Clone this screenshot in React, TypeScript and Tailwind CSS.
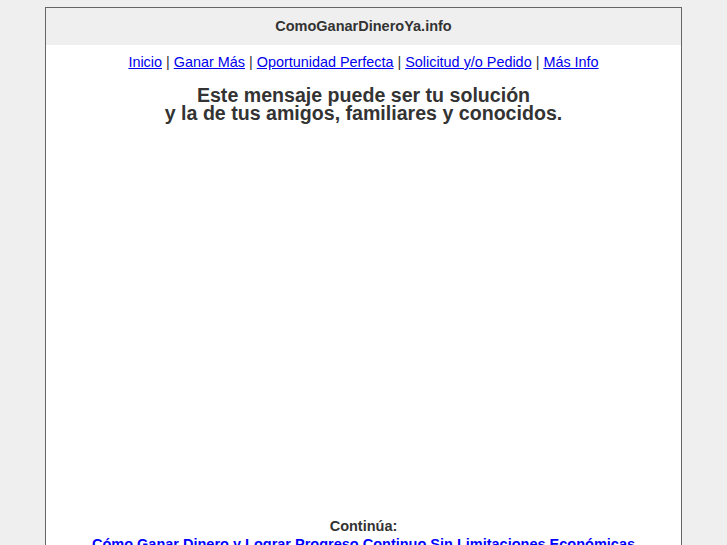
const NAV = ["Inicio", "Ganar Más", "Oportunidad Perfecta", "Solicitud y/o Pedido", "Más Info"];

export default function App() {
  return (
    <div
      className="min-h-[545px] bg-[#efefef] pt-[7px] text-[#333]"
      style={{ fontFamily: '"Liberation Sans", Arial, sans-serif' }}
    >
      <div className="mx-auto w-[637px] border border-[#666] bg-white">
        {/* site title bar */}
        <div className="flex h-[37px] items-center justify-center bg-[#efefef] text-[14.5px] font-bold">
          ComoGanarDineroYa.info
        </div>

        {/* nav */}
        <div className="mt-[8px] text-center text-[14.4px] leading-[18px]">
          {NAV.map((item, i) => (
            <span key={item}>
              {i > 0 && <span> | </span>}
              <a href="#" className="text-[#0000ee] underline">{item}</a>
            </span>
          ))}
        </div>

        <h1 className="mt-[15px] text-center text-[19.6px] font-bold leading-[18px]">
          Este mensaje puede ser tu solución
          <br />
          y la de tus amigos, familiares y conocidos.
        </h1>

        {/* video area left blank */}
        <div className="h-[395px]" />

        <p className="text-center text-[14.5px] font-bold leading-[18px]">Continúa:</p>
        <p className="text-center text-[14.5px] font-bold leading-[18px]">
          <a href="#" className="text-[#0000ff] underline">
            Cómo Ganar Dinero y Lograr Progreso Continuo Sin Limitaciones Económicas
          </a>
        </p>
        <div className="h-[40px]" />
      </div>
    </div>
  );
}
